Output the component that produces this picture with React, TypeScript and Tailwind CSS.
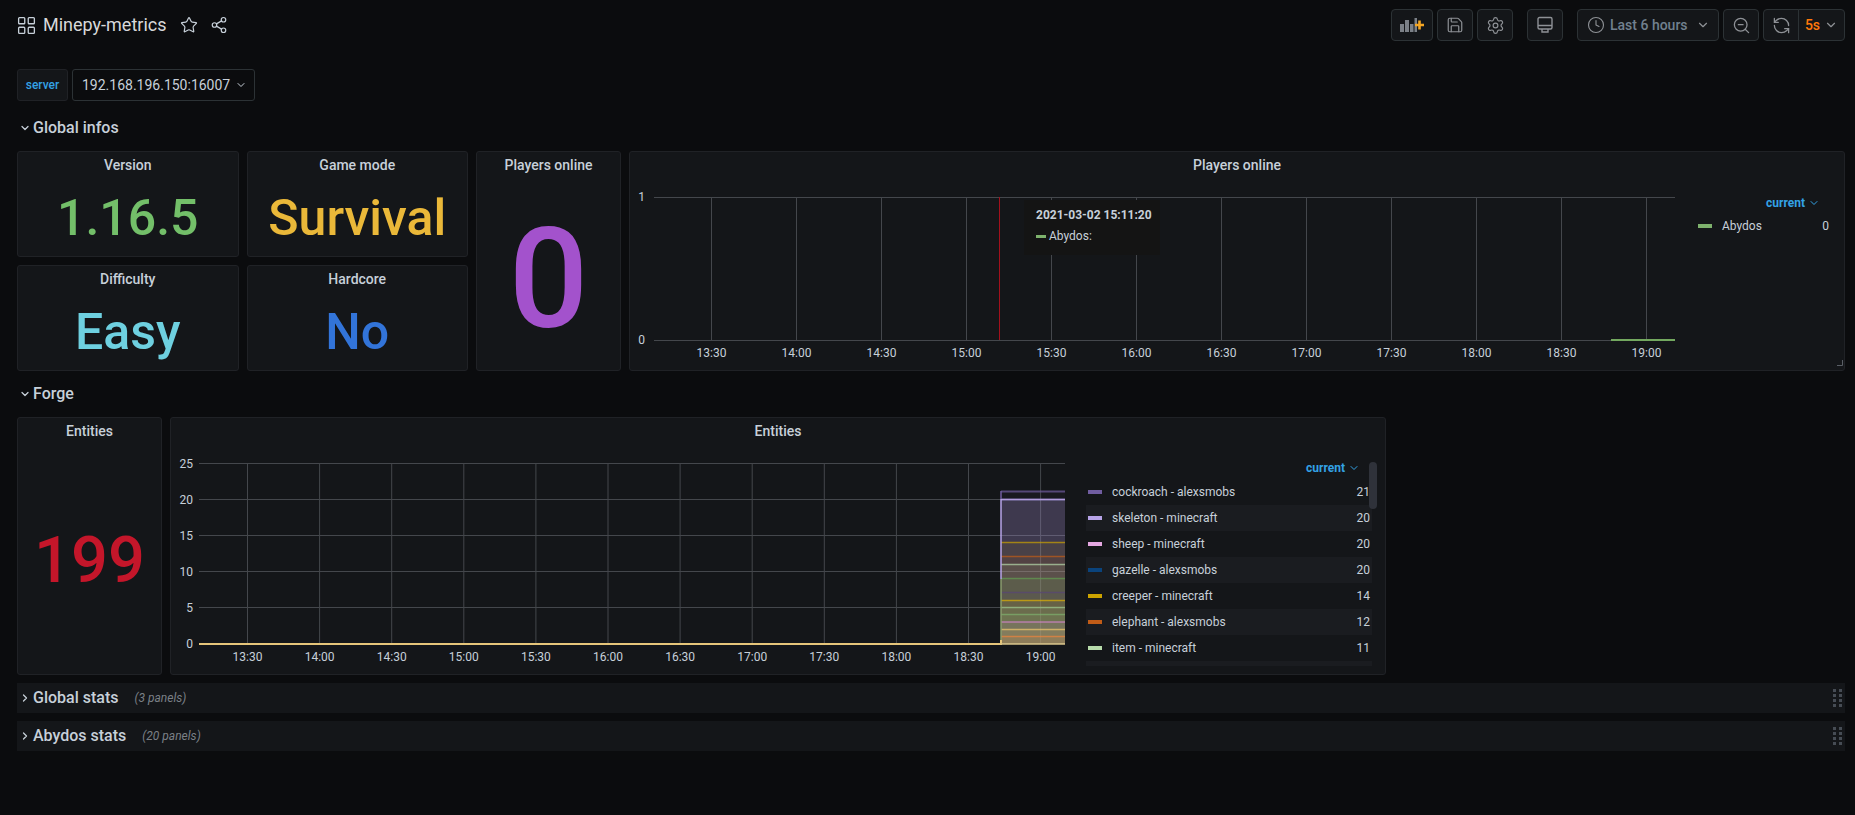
import { ChevronDown, ChevronRight, LayoutGrid, Star, Share2, Save, Settings, Clock, ZoomOut, RefreshCcw } from "lucide-react";

const ROBOTO = "font-['Roboto',sans-serif]";

function ToolButton({ className, children }: { className: string; children: React.ReactNode }) {
  return (
    <div className={`flex h-8 items-center justify-center border border-[#2c3235] bg-[#141619] text-[#8e9196] ${className}`}>
      {children}
    </div>
  );
}

function AddPanelIcon() {
  return (
    <svg width="25" height="16" viewBox="0 0 25 16">
      <rect x="0" y="7" width="4" height="8" fill="#7b8087" />
      <rect x="5" y="3" width="4" height="12" fill="#7b8087" />
      <rect x="10" y="7" width="3.5" height="8" fill="#7b8087" />
      <rect x="14.5" y="1" width="2.5" height="14" fill="#7b8087" />
      <path d="M15 8h9M19.5 3.5v9" stroke="#f5a623" strokeWidth="2.6" />
    </svg>
  );
}

function MonitorIcon() {
  return (
    <svg width="18" height="18" viewBox="0 0 18 18" fill="none" stroke="#8e9196" strokeWidth="1.4">
      <rect x="2" y="1.5" width="14" height="11.5" rx="1.5" />
      <path d="M2 9.5h14M6 13v3h6v-3" />
    </svg>
  );
}

function TopBar() {
  return (
    <div className="flex h-[50px] items-center pl-[16px] pr-[10px]">
      <LayoutGrid size={21} className="text-[#c7d0d9]" strokeWidth={1.5} />
      <span className="ml-[6px] text-[18px] leading-none text-[#d8d9da]">Minepy-metrics</span>
      <Star size={18} className="ml-[13px] text-[#c7d0d9]" strokeWidth={1.6} />
      <Share2 size={18} className="ml-[12px] text-[#c7d0d9]" strokeWidth={1.6} />
      <div className="ml-auto flex items-center">
        <ToolButton className="w-[42px] rounded-sm"><AddPanelIcon /></ToolButton>
        <ToolButton className="ml-1 w-9 rounded-sm"><Save size={18} strokeWidth={1.6} /></ToolButton>
        <ToolButton className="ml-1 w-9 rounded-sm"><Settings size={19} strokeWidth={1.5} /></ToolButton>
        <ToolButton className="ml-[14px] w-9 rounded-sm"><MonitorIcon /></ToolButton>
        <ToolButton className="ml-[14px] w-[142px] justify-start rounded-sm pl-[9px]">
          <Clock size={18} strokeWidth={1.5} />
          <span className="ml-[5px] text-[14px] font-medium text-[#71808f]">Last 6 hours</span>
          <ChevronDown size={14} className="ml-auto mr-[8px]" />
        </ToolButton>
        <ToolButton className="ml-1 w-9 rounded-sm"><ZoomOut size={19} strokeWidth={1.6} /></ToolButton>
        <ToolButton className="ml-1 w-[36px] rounded-l-sm"><RefreshCcw size={19} strokeWidth={1.6} /></ToolButton>
        <ToolButton className="-ml-px w-[47px] rounded-r-sm">
          <span className="text-[14px] font-medium text-[#ff780a]">5s</span>
          <ChevronDown size={14} className="ml-1" />
        </ToolButton>
      </div>
    </div>
  );
}

function RowHeader({ title }: { title: string }) {
  return (
    <div className="flex h-[30px] items-center">
      <ChevronDown size={12} className="ml-[2px] mr-[2px] text-[#c7d0d9]" strokeWidth={2.5} />
      <span className="text-[16px] font-medium text-[#c7d0d9]">{title}</span>
    </div>
  );
}

function StatPanel({ title, value, color, size, className }: { title: string; value: string; color: string; size: string; className: string }) {
  return (
    <div className={`flex flex-col rounded-[3px] border border-[#202226] bg-[#141619] ${className}`}>
      <div className="mt-[4px] h-[18px] text-center text-[14px] font-medium leading-[18px] text-[#c7d0d9]">{title}</div>
      <div className={`flex flex-1 items-center justify-center font-medium ${color} ${size}`}>{value}</div>
    </div>
  );
}

const timeLabels = ["13:30", "14:00", "14:30", "15:00", "15:30", "16:00", "16:30", "17:00", "17:30", "18:00", "18:30", "19:00"];

function PlayersChart() {
  return (
    <svg width="1060" height="218" viewBox="630 152 1060 218" className="shrink-0">
      {timeLabels.map((label, i) => {
        const x = 711.5 + i * 85;
        return (
          <g key={label}>
            <line x1={x} x2={x} y1={197} y2={340} stroke="#44474c" />
            <text x={x} y={357} textAnchor="middle" fontSize="12" fill="#c7d0d9" fontFamily="Roboto">{label}</text>
          </g>
        );
      })}
      <line x1={654} x2={1675} y1={197.5} y2={197.5} stroke="#44474c" />
      <line x1={654} x2={1675} y1={340.5} y2={340.5} stroke="#44474c" />
      <text x={645} y={201} textAnchor="end" fontSize="12" fill="#c7d0d9" fontFamily="Roboto">1</text>
      <text x={645} y={344} textAnchor="end" fontSize="12" fill="#c7d0d9" fontFamily="Roboto">0</text>
      <line x1={999.5} x2={999.5} y1={197} y2={340} stroke="#a3101c" />
      <line x1={1611} x2={1675} y1={340} y2={340} stroke="#73a85f" strokeWidth="2" />
    </svg>
  );
}

// drawn bottom to top, the later ones sit over the earlier fills
const series = [
  { y: 499.5, color: "#0a437c", fill: 0.02, width: 1.3 },
  { y: 499.5, color: "#e5a8e2", fill: 0.04, width: 1.3 },
  { y: 491.5, color: "#705da0", fill: 0.06, width: 2 },
  { y: 499.5, color: "#b7a4e8", fill: 0.2, width: 1.5 },
  { y: 542.5, color: "#cca300", fill: 0.08, width: 1.3 },
  { y: 556.5, color: "#c15c17", fill: 0.08, width: 1.6 },
  { y: 564.5, color: "#b7dbab", fill: 0.09, width: 1.3 },
  { y: 578.5, color: "#629e51", fill: 0.16, width: 1.6 },
  { y: 592.5, color: "#584477", fill: 0.08, width: 1.3 },
  { y: 600.5, color: "#e0b400", fill: 0.09, width: 1.3 },
  { y: 607.5, color: "#9ac48a", fill: 0.11, width: 1.3 },
  { y: 614.5, color: "#7eb26d", fill: 0.1, width: 1.3 },
  { y: 622, color: "#d683ce", fill: 0.1, width: 1.3 },
  { y: 629.5, color: "#f2c96d", fill: 0.1, width: 1.3 },
  { y: 636.5, color: "#ef843c", fill: 0.1, width: 1.3 },
];

function EntitiesChart() {
  return (
    <svg width="900" height="224" viewBox="171 450 900 224" className="shrink-0">
      {[463.5, 499.5, 535.5, 571.5, 607.5, 643.5].map((y, i) => (
        <g key={y}>
          <line x1={199} x2={1065} y1={y} y2={y} stroke="#44474c" />
          <text x={193} y={y + 4} textAnchor="end" fontSize="12" fill="#c7d0d9" fontFamily="Roboto">{25 - i * 5}</text>
        </g>
      ))}
      {timeLabels.map((label, i) => {
        const x = 247.5 + i * 72.1;
        return (
          <g key={label}>
            <line x1={x} x2={x} y1={463} y2={644} stroke="#44474c" />
            <text x={x} y={661} textAnchor="middle" fontSize="12" fill="#c7d0d9" fontFamily="Roboto">{label}</text>
          </g>
        );
      })}
      {series.map((s) => (
        <g key={s.color}>
          <rect x={1001} y={s.y} width={64} height={644 - s.y} fill={s.color} fillOpacity={s.fill} />
          <line x1={1001} x2={1065} y1={s.y} y2={s.y} stroke={s.color} strokeOpacity="0.7" strokeWidth={s.width} />
        </g>
      ))}
      <line x1={1001} x2={1001} y1={491} y2={499} stroke="#705da0" strokeWidth="1.5" />
      <line x1={1001} x2={1001} y1={499} y2={579} stroke="#b7a4e8" strokeWidth="1.5" />
      <line x1={1001} x2={1001} y1={579} y2={644} stroke="#8a9c6e" strokeWidth="1.5" />
      <path d="M199 644H1001V640" stroke="#e5c57a" strokeWidth="2" fill="none" />
      <path d="M1001 644H1065" stroke="#d9c48a" strokeWidth="1.5" fill="none" />
    </svg>
  );
}

const legendRows = [
  { name: "cockroach - alexsmobs", value: 21, color: "bg-[#705da0]" },
  { name: "skeleton - minecraft", value: 20, color: "bg-[#b7a4e8]" },
  { name: "sheep - minecraft", value: 20, color: "bg-[#e5a8e2]" },
  { name: "gazelle - alexsmobs", value: 20, color: "bg-[#0a437c]" },
  { name: "creeper - minecraft", value: 14, color: "bg-[#cca300]" },
  { name: "elephant - alexsmobs", value: 12, color: "bg-[#c15c17]" },
  { name: "item - minecraft", value: 11, color: "bg-[#b7dbab]" },
];

function CurrentHeader() {
  return (
    <span className="flex items-center text-[12px] font-bold text-[#33a2e5]">
      current
      <ChevronDown size={12} className="ml-[3px]" />
    </span>
  );
}

function CollapsedRow({ title, panels }: { title: string; panels: number }) {
  return (
    <div className="flex h-[30px] items-center bg-[#141619] pr-[3px]">
      <ChevronRight size={12} className="ml-[2px] mr-[2px] text-[#c7d0d9]" strokeWidth={2.5} />
      <span className="text-[16px] font-medium text-[#c7d0d9]">{title}</span>
      <span className="ml-4 text-[12px] italic text-[#7b8087]">({panels} panels)</span>
      <div className="ml-auto grid grid-cols-2 gap-x-[3px] gap-y-[2px]">
        {Array.from({ length: 8 }).map((_, i) => (
          <div key={i} className="h-[3px] w-[3px] bg-[#464c54]" />
        ))}
      </div>
    </div>
  );
}

export default function App() {
  return (
    <div className={`min-h-screen bg-[#0b0c0e] ${ROBOTO}`}>
      <TopBar />
      <div className="pl-[17px] pr-[10px]">
        <div className="mt-[19px] flex h-8 text-[14px]">
          <div className="flex w-[51px] items-center justify-center rounded-[3px] border border-[#202226] bg-[#141619] text-[12px] font-medium text-[#33a2e5]">server</div>
          <div className="ml-1 flex w-[183px] items-center rounded-[3px] border border-[#2c3235] pl-[9px] text-[#c7d0d9]">
            192.168.196.150:16007
            <ChevronDown size={12} className="ml-[5px]" />
          </div>
        </div>

        <div className="mt-[12px]"><RowHeader title="Global infos" /></div>
        <div className="mt-[8px] grid grid-cols-[repeat(24,minmax(0,1fr))] grid-rows-[106px_106px] gap-2">
          <StatPanel title="Version" value="1.16.5" color="text-[#73bf69]" size="pt-[7px] text-[50px]" className="col-span-3" />
          <StatPanel title="Game mode" value="Survival" color="text-[#eab839]" size="pt-[7px] text-[50px]" className="col-span-3" />
          <StatPanel title="Players online" value="0" color="text-[#a352cc]" size="text-[140px]" className="col-span-2 row-span-2" />
          <div className="relative col-span-16 row-span-2 rounded-[3px] border border-[#202226] bg-[#141619]">
            <div className="absolute inset-x-0 top-[4px] text-center text-[14px] font-medium leading-[18px] text-[#c7d0d9]">Players online</div>
            <div className="flex h-full">
              <PlayersChart />
              <div className="ml-[8px] flex w-[132px] flex-col text-[12px] text-[#c7d0d9]">
                <div className="mt-[42px] flex justify-end pr-[10px]"><CurrentHeader /></div>
                <div className="mt-[5px] flex items-center">
                  <div className="h-1 w-[14px] bg-[#7eb26d]" />
                  <span className="ml-[10px]">Abydos</span>
                  <span className="ml-auto pr-[1px]">0</span>
                </div>
              </div>
            </div>
            <div className="absolute left-[394px] top-[48px] h-[55px] w-[136px] bg-[#141414] pl-3 pt-[7px] text-[12px] text-[#c7d0d9]">
              <div className="font-bold leading-[16px]">2021-03-02 15:11:20</div>
              <div className="mt-[5px] flex items-center leading-[16px]">
                <div className="h-[3px] w-[10px] bg-[#7eb26d]" />
                <span className="ml-[3px]">Abydos:</span>
              </div>
            </div>
            <svg width="6" height="6" viewBox="0 0 6 6" className="absolute bottom-[4px] right-[1px]">
              <path d="M5.5 0V5.5H0" stroke="#5a5f66" fill="none" />
            </svg>
          </div>
          <StatPanel title="Difficulty" value="Easy" color="text-[#6ed0e0]" size="pt-[7px] text-[50px]" className="col-span-3" />
          <StatPanel title="Hardcore" value="No" color="text-[#3274d9]" size="pt-[7px] text-[50px]" className="col-span-3" />
        </div>

        <div className="mt-2"><RowHeader title="Forge" /></div>
        <div className="mt-2 grid h-[258px] grid-cols-[repeat(24,minmax(0,1fr))] gap-2">
          <StatPanel title="Entities" value="199" color="text-[#c4162a]" size="pt-[7px] text-[65px]" className="col-span-2" />
          <div className="relative col-span-16 flex rounded-[3px] border border-[#202226] bg-[#141619]">
            <div className="absolute inset-x-0 top-[4px] text-center text-[14px] font-medium leading-[18px] text-[#c7d0d9]">Entities</div>
            <div className="mt-[32px]"><EntitiesChart /></div>
            <div className="relative ml-[15px] w-[286px] text-[12px] text-[#c7d0d9]">
              <div className="mt-[42px] flex h-[16px] justify-end pr-[12px]"><CurrentHeader /></div>
              <div className="mt-[3px]">
                {legendRows.map((row, i) => (
                  <div key={row.name} className={`flex h-[26px] items-center pl-[2px] pr-[2px] ${i % 2 === 1 ? "bg-[#1a1c20]" : ""}`}>
                    <div className={`h-[4px] w-[14px] ${row.color}`} />
                    <span className="ml-[10px]">{row.name}</span>
                    <span className="ml-auto">{row.value}</span>
                  </div>
                ))}
                <div className="h-[5px] bg-[#1a1c20]" />
              </div>
              <div className="absolute right-[-5px] top-[44px] h-[47px] w-2 rounded-sm bg-[#2f323a]" />
            </div>
          </div>
        </div>

        <div className="mt-2"><CollapsedRow title="Global stats" panels={3} /></div>
        <div className="mt-2"><CollapsedRow title="Abydos stats" panels={20} /></div>
      </div>
    </div>
  );
}
